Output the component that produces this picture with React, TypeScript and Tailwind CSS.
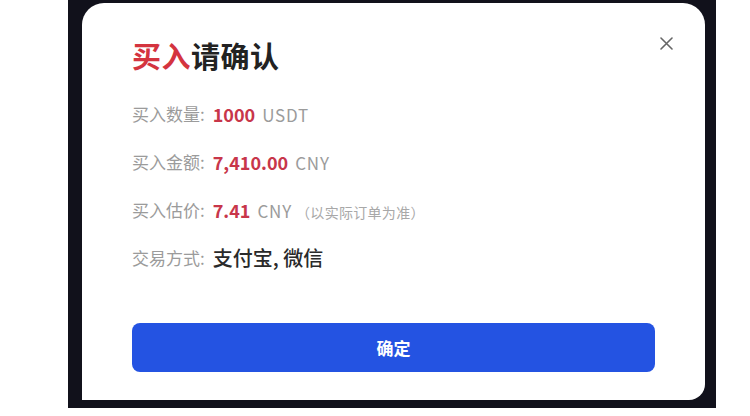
const font = "font-['Noto_Sans_CJK_SC','Noto_Sans',sans-serif]";

function Row({ label, children }: { label: string; children: React.ReactNode }) {
  return (
    <div className="flex h-[48px] items-center whitespace-nowrap">
      <span className="text-[17px] text-[#9b9b9b]">{label}:</span>
      <span className="ml-[8px] flex items-baseline">{children}</span>
    </div>
  );
}

function CloseIcon() {
  return (
    <svg width="13" height="13" viewBox="0 0 13 13" fill="none">
      <path d="M1 1L12 12M12 1L1 12" stroke="#666" strokeWidth="1.6" strokeLinecap="round" />
    </svg>
  );
}

export default function App() {
  return (
    <div className={`h-[416px] w-[750px] bg-white ${font}`}>
      <div className="ml-[68px] h-[408px] w-[648px] bg-[#11111b] pb-[8px] pl-[14px] pr-[11px] pt-[3px]">
        <div className="relative h-[397px] w-[623px] rounded-t-[22px] rounded-br-[16px] bg-white px-[50px] pt-[37px]">
          <button className="absolute right-[30px] top-[31px] flex h-[18px] w-[18px] items-center justify-center">
            <CloseIcon />
          </button>

          <h1 className="h-[30px] text-[29px] font-bold leading-[30px] tracking-[0.5px]">
            <span className="text-[#d4343f]">买入</span>
            <span className="text-[#222]">请确认</span>
          </h1>

          <div className="mt-[20px] flex flex-col">
            <Row label="买入数量">
              <span className="text-[18px] font-semibold text-[#c8364a]">1000</span>
              <span className="ml-[7px] text-[17px] tracking-[0.8px] text-[#9b9b9b]">USDT</span>
            </Row>
            <Row label="买入金额">
              <span className="text-[18px] font-semibold text-[#c8364a]">7,410.00</span>
              <span className="ml-[7px] text-[17px] tracking-[0.8px] text-[#9b9b9b]">CNY</span>
            </Row>
            <Row label="买入估价">
              <span className="text-[18px] font-semibold text-[#c8364a]">7.41</span>
              <span className="ml-[7px] text-[17px] tracking-[0.8px] text-[#9b9b9b]">CNY</span>
              <span className="ml-[4px] text-[14px] tracking-[0.3px] text-[#a8a8a8]">（以实际订单为准）</span>
            </Row>
            <Row label="交易方式">
              <span className="text-[20px] font-medium text-[#2a2a2a]">支付宝, 微信</span>
            </Row>
          </div>

          <button className="mt-[41px] flex h-[49px] w-full items-center justify-center rounded-[8px] bg-[#2453e2] text-[17px] font-bold text-white">
            确定
          </button>
        </div>
      </div>
    </div>
  );
}
